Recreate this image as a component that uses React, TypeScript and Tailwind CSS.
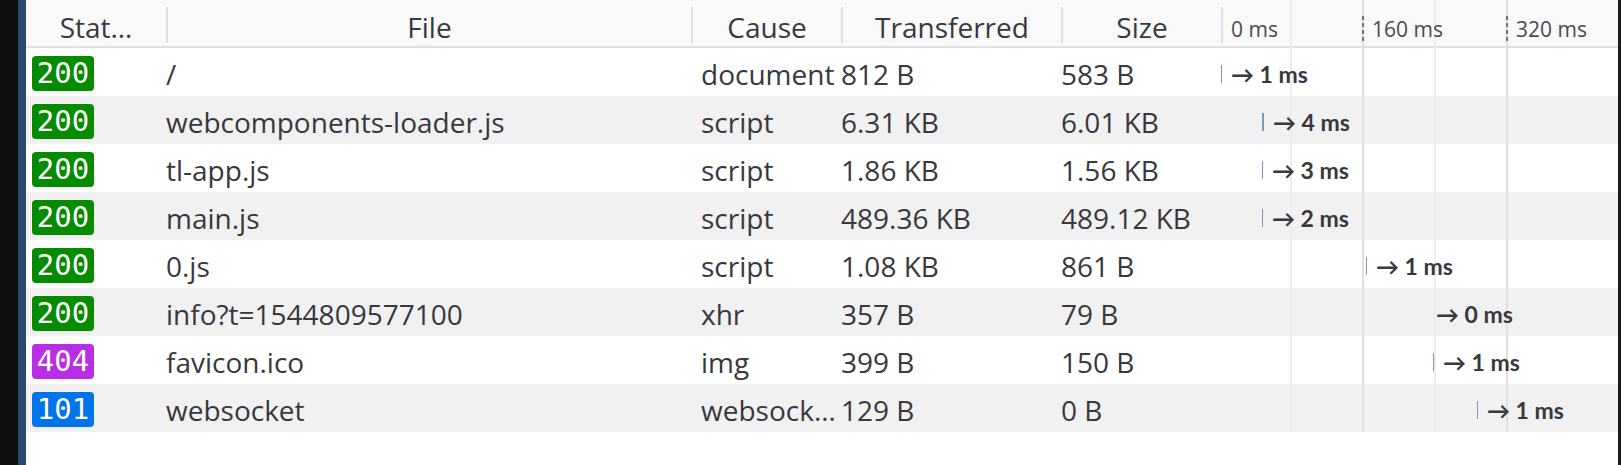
import React from "react";

type Row = {
  code: string;
  badge: string;
  file: string;
  cause: string;
  tr: string;
  size: string;
  off: number;
  w: number;
  ms: string;
};

const rows: Row[] = [
  { code: "200", badge: "bg-[#058b00]", file: "/", cause: "document", tr: "812 B", size: "583 B", off: 0, w: 1, ms: "1 ms" },
  { code: "200", badge: "bg-[#058b00]", file: "webcomponents-loader.js", cause: "script", tr: "6.31 KB", size: "6.01 KB", off: 41, w: 2, ms: "4 ms" },
  { code: "200", badge: "bg-[#058b00]", file: "tl-app.js", cause: "script", tr: "1.86 KB", size: "1.56 KB", off: 41, w: 1, ms: "3 ms" },
  { code: "200", badge: "bg-[#058b00]", file: "main.js", cause: "script", tr: "489.36 KB", size: "489.12 KB", off: 41, w: 1, ms: "2 ms" },
  { code: "200", badge: "bg-[#058b00]", file: "0.js", cause: "script", tr: "1.08 KB", size: "861 B", off: 145, w: 1, ms: "1 ms" },
  { code: "200", badge: "bg-[#058b00]", file: "info?t=1544809577100", cause: "xhr", tr: "357 B", size: "79 B", off: 206, w: 0, ms: "0 ms" },
  { code: "404", badge: "bg-[#b82ee5]", file: "favicon.ico", cause: "img", tr: "399 B", size: "150 B", off: 212, w: 1, ms: "1 ms" },
  { code: "101", badge: "bg-[#0074e8]", file: "websocket", cause: "websocket", tr: "129 B", size: "0 B", off: 256, w: 1, ms: "1 ms" },
];

const GRID = "grid grid-cols-[140px_525px_150px_220px_160px_397px]";
const LINES =
  "bg-[linear-gradient(to_right,transparent_69px,#ededf0_69px,#ededf0_71px,transparent_71px,transparent_141px,#dfdfe2_141px,#dfdfe2_143px,transparent_143px,transparent_213px,#ededf0_213px,#ededf0_215px,transparent_215px,transparent_285px,#dfdfe2_285px,#dfdfe2_287px,transparent_287px)]";

function HeaderCell({ label, first }: { label: string; first?: boolean }) {
  return (
    <div className="flex items-start h-full min-w-0">
      {!first && <div className="mt-[7px] h-[36px] w-[2px] shrink-0 bg-[#e0e0e2]" />}
      <div className="flex-1 min-w-0 text-center pt-[8px] leading-[38px] whitespace-nowrap">{label}</div>
    </div>
  );
}

export default function App() {
  return (
    <div className="flex w-[1621px] h-[465px] bg-white overflow-hidden">
      <div className="w-[18px] shrink-0 bg-[#0d0e10]" />
      <div className="w-[8px] shrink-0 bg-[#2b4a6b]" />
      <div
        className="flex flex-col w-[1592px] shrink-0 text-[28px] text-[#38383d]"
        style={{ fontFamily: "'Open Sans', 'Noto Sans', sans-serif" }}
      >
        <div className={`${GRID} h-[48px] bg-[#f9f9fa] border-b-2 border-[#e0e0e2]`}>
          <HeaderCell label="Stat…" first />
          <HeaderCell label="File" />
          <HeaderCell label="Cause" />
          <HeaderCell label="Transferred" />
          <HeaderCell label="Size" />
          <div className={`flex items-start h-full ${LINES} text-[21px] text-[#4a4a4f]`}>
            <div className="mt-[7px] h-[36px] w-[2px] shrink-0 bg-[#e0e0e2]" />
            <div className="w-[139px] shrink-0 pl-[8px] pt-[15px] leading-[28px]">0 ms</div>
            <div className="mt-[16px] h-[27px] w-[2px] shrink-0 bg-[repeating-linear-gradient(to_bottom,#6f6f73_0px,#6f6f73_4px,transparent_4px,transparent_7px)]" />
            <div className="w-[142px] shrink-0 pl-[8px] pt-[15px] leading-[28px]">160 ms</div>
            <div className="mt-[16px] h-[27px] w-[2px] shrink-0 bg-[repeating-linear-gradient(to_bottom,#6f6f73_0px,#6f6f73_4px,transparent_4px,transparent_7px)]" />
            <div className="flex-1 pl-[8px] pt-[15px] leading-[28px]">320 ms</div>
          </div>
        </div>
        {rows.map((r, i) => (
          <div key={i} className={`${GRID} h-[48px] ${i % 2 === 1 ? "bg-[#f1f1f2]" : "bg-white"}`}>
            <div className="pl-[6px] pt-[8px]">
              <div
                className={`${r.badge} w-[62px] h-[35px] rounded-[4px] text-white text-[29px] leading-[35px] text-center`}
                style={{ fontFamily: "'DejaVu Sans Mono', 'Liberation Mono', monospace" }}
              >
                {r.code}
              </div>
            </div>
            <div className="pt-[7px] leading-[38px] whitespace-nowrap truncate">{r.file}</div>
            <div className="pl-[10px] pt-[7px] leading-[38px]">
              <div className="w-[135px] whitespace-nowrap truncate">{r.cause}</div>
            </div>
            <div className="pt-[7px] leading-[38px] whitespace-nowrap">{r.tr}</div>
            <div className="pt-[7px] leading-[38px] whitespace-nowrap">{r.size}</div>
            <div className={`flex items-start h-full ${LINES}`} style={{ paddingLeft: r.off }}>
              <div className="mt-[17px] h-[18px] shrink-0 bg-[#7a9bbb]" style={{ width: r.w }} />
              <div
                className="ml-[9px] pt-[12px] leading-[28px] text-[23px] font-bold text-[#38383d] whitespace-nowrap"
                style={{ fontFamily: "Lato, 'Open Sans', sans-serif" }}
              >
                → {r.ms}
              </div>
            </div>
          </div>
        ))}
      </div>
      <div className="w-[3px] shrink-0 bg-[#1c1c1e]" />
    </div>
  );
}
